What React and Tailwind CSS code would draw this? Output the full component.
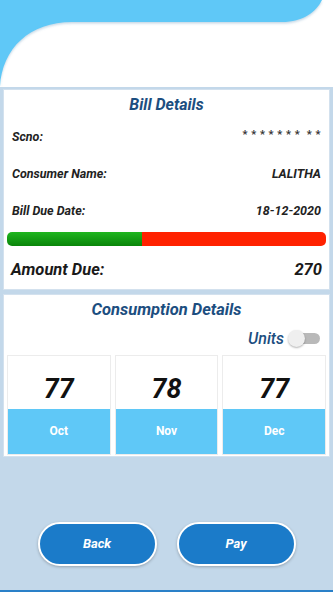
import React from "react";

// ─── Data ─────────────────────────────────────────────────────────────────────
const ROWS = [
  { label: "Scno:", value: "* * * * * * *  * *", stars: true },
  { label: "Consumer Name:", value: "LALITHA" },
  { label: "Bill Due Date:", value: "18-12-2020" },
];

const MONTHS = [
  { value: 77, month: "Oct" },
  { value: 78, month: "Nov" },
  { value: 77, month: "Dec" },
];

// ─── Header wave ──────────────────────────────────────────────────────────────
const HeaderWave = () => (
  <div className="h-[87px] bg-white relative shrink-0">
    <svg
      className="absolute left-0 top-0"
      width="333"
      height="87"
      viewBox="0 0 333 87"
    >
      <defs>
        <filter id="waveShadow" x="-5%" y="-5%" width="110%" height="120%">
          <feDropShadow dx="0" dy="1.5" stdDeviation="1.2" floodColor="#5a8fb5" floodOpacity="0.35" />
        </filter>
      </defs>
      <path
        d="M0 0 H322 C316 12 303 22 282 22 H72 C30 22 2 48 0 87 Z"
        fill="#5fc8f7"
        filter="url(#waveShadow)"
      />
    </svg>
  </div>
);

// ─── Cards ────────────────────────────────────────────────────────────────────
const BillDetails = () => (
  <div className="mx-[3px] mt-[2px] h-[201px] bg-white border border-[#d3e1ee] flex flex-col">
    <h2 className="text-center text-[16px] font-bold italic text-[#1c4e80] leading-none pt-[7px]">
      Bill Details
    </h2>
    <div className="flex flex-col pt-[17px] gap-[23px] px-[8px]">
      {ROWS.map((r) => (
        <div key={r.label} className="flex justify-between items-center h-[14px]">
          <span className="text-[12.5px] font-bold italic text-[#222]">{r.label}</span>
          <span
            className={
              r.stars
                ? "text-[11px] font-bold text-[#333] whitespace-pre -mt-[4px] tracking-[0.5px]"
                : "text-[12.5px] font-bold italic text-[#222]"
            }
          >
            {r.value}
          </span>
        </div>
      ))}
    </div>
    <div className="mx-[3px] mt-[14px] h-[14px] rounded-[5px] overflow-hidden flex">
      <div className="w-[135px] bg-gradient-to-b from-[#1fb61f] to-[#0a850a]" />
      <div className="flex-1 bg-[#ff2200]" />
    </div>
    <div className="flex justify-between items-center px-[7px] mt-[12px]">
      <span className="text-[16.5px] font-bold italic text-[#1a1a1a]">Amount Due:</span>
      <span className="text-[16.5px] font-bold italic text-[#1a1a1a]">270</span>
    </div>
  </div>
);

const ConsumptionDetails = () => (
  <div className="mx-[3px] mt-[4px] h-[163px] bg-white border border-[#d3e1ee] flex flex-col">
    <h2 className="text-center text-[16.5px] font-bold italic text-[#1c4e80] leading-none pt-[7px]">
      Consumption Details
    </h2>
    <div className="flex justify-end items-center gap-[4px] pr-[9px] mt-[11px] h-[18px]">
      <span className="text-[16px] font-medium italic text-[#1c4e80]">Units</span>
      <div className="relative w-[32px] h-[18px] flex items-center">
        <div className="absolute right-0 left-[4px] h-[11px] rounded-full bg-[#b9b9b9]" />
        <div className="absolute left-0 w-[17px] h-[17px] rounded-full bg-[#efefef] shadow-[0_1px_2px_rgba(0,0,0,0.3)]" />
      </div>
    </div>
    <div className="grid grid-cols-3 gap-[4px] px-[3px] mt-[7px]">
      {MONTHS.map((m) => (
        <div key={m.month} className="flex flex-col border border-[#ececec]">
          <div className="h-[53px] flex items-center justify-center pt-[14px]">
            <span className="text-[27px] font-bold italic text-[#111] leading-none">{m.value}</span>
          </div>
          <div className="h-[45px] bg-[#5fc8f7] flex items-center justify-center">
            <span className="text-[12px] font-bold text-white">{m.month}</span>
          </div>
        </div>
      ))}
    </div>
  </div>
);

// ─── Page ─────────────────────────────────────────────────────────────────────
export default function App() {
  return (
    <div
      className="w-[333px] h-[592px] bg-[#c3d8ea] flex flex-col overflow-hidden"
      style={{ fontFamily: "Roboto, 'Liberation Sans', sans-serif" }}
    >
      <HeaderWave />
      <BillDetails />
      <ConsumptionDetails />
      <div className="flex-1 flex items-end justify-center gap-[20px] pb-[24px]">
        {["Back", "Pay"].map((b) => (
          <button
            key={b}
            className="w-[119px] h-[44px] rounded-full bg-[#1b7bc9] border-2 border-white shadow-[0_1px_3px_rgba(0,0,0,0.25)] text-white text-[13px] font-bold italic"
          >
            {b}
          </button>
        ))}
      </div>
      <div className="h-[2px] bg-[#2a80c8] shrink-0" />
    </div>
  );
}
